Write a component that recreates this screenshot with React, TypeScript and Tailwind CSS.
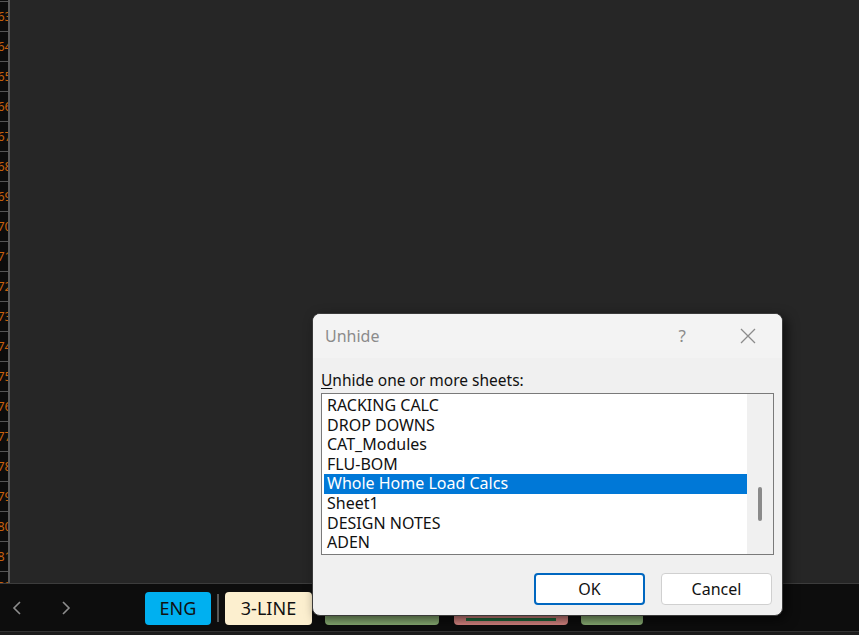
import React from 'react';

const sheets = [
  'RACKING CALC',
  'DROP DOWNS',
  'CAT_Modules',
  'FLU-BOM',
  'Whole Home Load Calcs',
  'Sheet1',
  'DESIGN NOTES',
  'ADEN',
];

const rowNums = Array.from({ length: 20 }, (_, i) => 63 + i);

function UnhideDialog() {
  return (
    <div className="absolute left-[312px] top-[313px] w-[471px] h-[303px] rounded-[8px] bg-[#f0f0f0] border border-[#3a3a3a] shadow-[4px_4px_12px_rgba(0,0,0,0.6)] flex flex-col overflow-hidden">
      <div className="h-[44px] bg-[#f3f3f3] flex items-center pl-[12px] pr-[26px]">
        <span className="text-[16px] text-[#8b8b8b] flex-1">Unhide</span>
        <span className="text-[17px] text-[#8b8b8b] mr-[54px]">?</span>
        <svg width="16" height="16" viewBox="0 0 16 16" className="text-[#8b8b8b]">
          <path d="M1 1L15 15M15 1L1 15" stroke="currentColor" strokeWidth="1.3" />
        </svg>
      </div>
      <div className="flex flex-col px-[8px] pt-[12px]">
        <div className="text-[15.5px] leading-[20px] text-[#111]">
          <span className="underline underline-offset-2">U</span>nhide one or more sheets:
        </div>
        <div className="mt-[3px] h-[162px] border border-[#7a7a7a] flex">
          <div className="flex-1 bg-white pt-[2px] pl-[2px]">
            {sheets.map((s, i) => (
              <div
                key={s}
                className={
                  'h-[19.6px] leading-[19.6px] text-[16px] pl-[3px] ' +
                  (i === 4 ? 'bg-[#0078d7] text-white' : 'text-[#111]')
                }
              >
                {s}
              </div>
            ))}
          </div>
          <div className="w-[26px] bg-[#f0f0f0] flex justify-center pt-[93px]">
            <div className="w-[4px] h-[34px] rounded-full bg-[#8a8a8a]" />
          </div>
        </div>
        <div className="flex justify-end gap-[16px] mt-[18px] pr-[2px]">
          <button className="w-[111px] h-[32px] rounded-[4px] bg-white border-2 border-[#0067c0] text-[16px] text-[#111]">
            OK
          </button>
          <button className="w-[111px] h-[32px] rounded-[4px] bg-white border border-[#d0d0d0] text-[16px] text-[#111]">
            Cancel
          </button>
        </div>
      </div>
    </div>
  );
}

export default function App() {
  return (
    <div
      className="relative w-[859px] h-[635px] overflow-hidden bg-[#262626]"
      style={{ fontFamily: '"Segoe UI", "Noto Sans", Arial, sans-serif' }}
    >
      <div className="flex h-[583px]">
        <div className="w-[8px] bg-[#0c0c0c] overflow-hidden border-r-2 border-[#5a5a5a] box-content">
          <div className="h-[2px] border-b border-[#555]" />
          {rowNums.map((n) => (
            <div
              key={n}
              className="h-[30px] border-b border-[#555] flex items-center justify-end text-[13px] text-[#c8600c] whitespace-nowrap"
            >
              <span className="-mr-[4px]">{n}</span>
            </div>
          ))}
        </div>
        <div className="flex-1 bg-[#262626]" />
      </div>
      <div className="h-[1px] bg-[#3c3c3c]" />
      <div className="h-[47px] bg-[#0d0d0d] flex items-center">
        <span className="ml-[12px] text-[#8d8d8d]">
          <svg width="10" height="16" viewBox="0 0 10 16">
            <path d="M8 2L2 8L8 14" stroke="currentColor" strokeWidth="1.6" fill="none" />
          </svg>
        </span>
        <span className="ml-[39px] text-[#8d8d8d]">
          <svg width="10" height="16" viewBox="0 0 10 16">
            <path d="M2 2L8 8L2 14" stroke="currentColor" strokeWidth="1.6" fill="none" />
          </svg>
        </span>
        <div className="ml-[74px] w-[66px] h-[33px] rounded-[4px] bg-[#00b0f0] flex items-center justify-center text-[18px] text-[#111] mt-[2px]">
          ENG
        </div>
        <div className="ml-[6px] w-[2px] h-[28px] bg-[#555]" />
        <div className="ml-[6px] w-[87px] h-[33px] rounded-[4px] bg-[#fcefcf] flex items-center justify-center text-[18px] text-[#111] mt-[2px]">
          3-LINE
        </div>
        <div className="ml-[13px] w-[114px] h-[33px] rounded-[4px] bg-[#8aaf74] mt-[2px]" />
        <div className="ml-[15px] w-[114px] h-[33px] rounded-[4px] bg-[#d98682] mt-[2px] flex items-end justify-center pb-[4px]">
          <div className="w-[90px] h-[3px] bg-[#1e6b3c]" />
        </div>
        <div className="ml-[13px] w-[62px] h-[33px] rounded-[4px] bg-[#8aaf74] mt-[2px]" />
      </div>
      <div className="h-[1px] bg-[#333]" />
      <div className="h-[3px] bg-[#1c1c1c]" />
      <UnhideDialog />
    </div>
  );
}
